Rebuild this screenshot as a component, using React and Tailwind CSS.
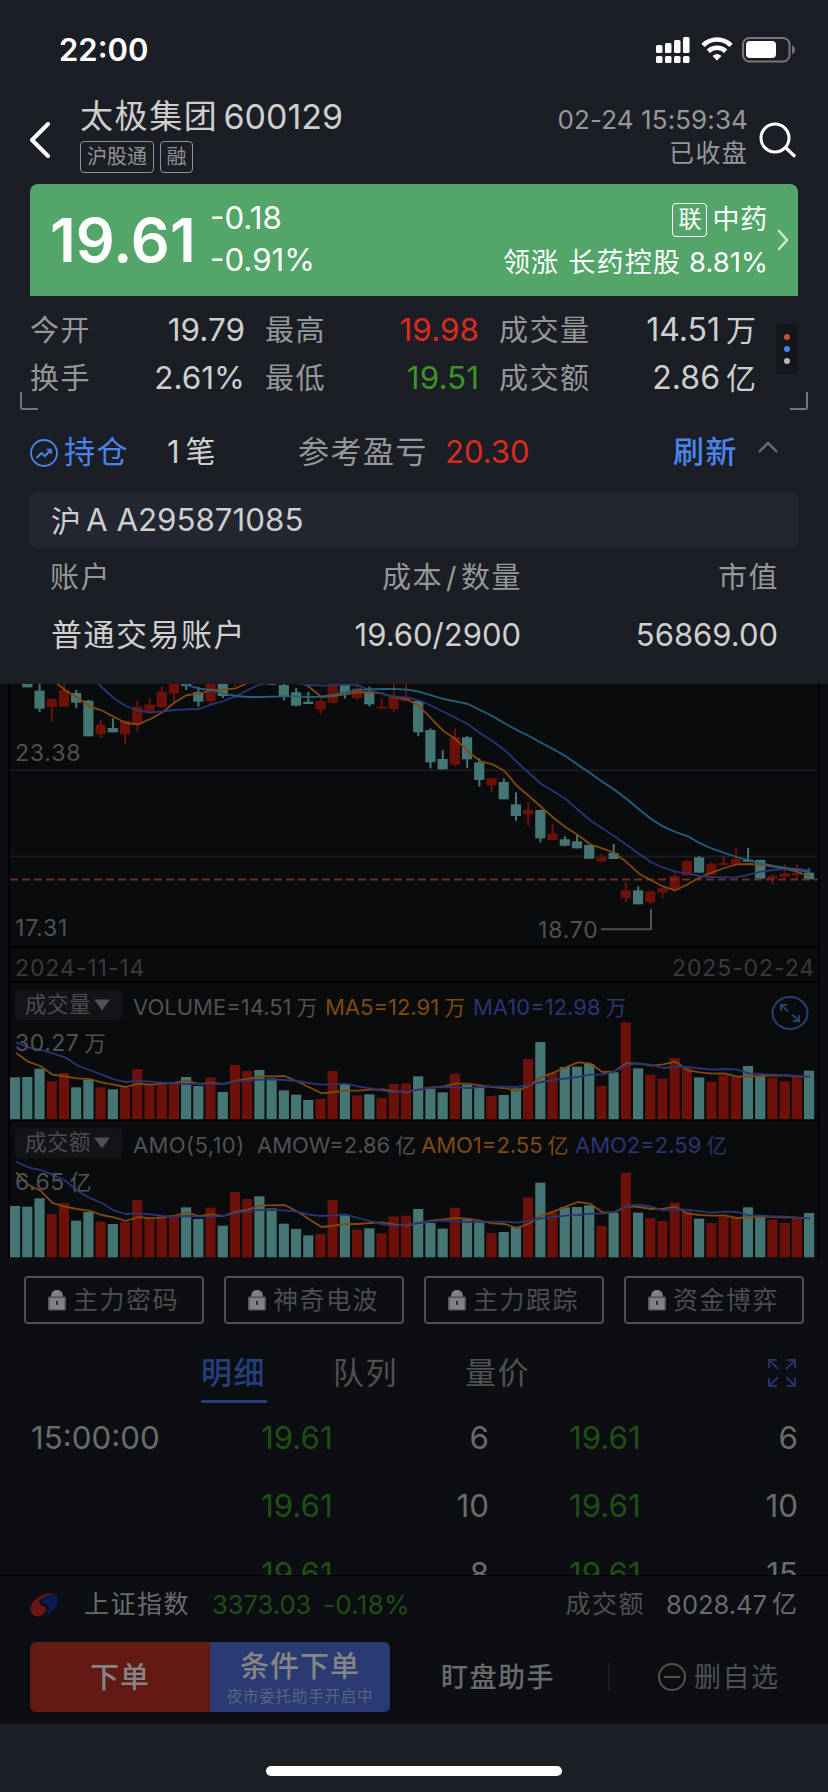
import React from 'react';

const BAR_STEP = 12.215;

// r = up (red), c = down (cyan)
const directions = 'cccrrccrcrrrrrccrcrrcccccrrcrcrrrcccrccrccrcrcccrcrcrrrrcrrrccrrrc';

const colorOf = {
    r: '#6b110a',
    c: '#457674',
};

// [index, direction, body top, body bottom, wick top, wick bottom]
const candles = [
    [1, 'c', 0, 52, 0, 52], [2, 'c', 62, 116, 40, 126], [3, 'r', 87, 111, 85, 156], [4, 'r', 60, 110, 40, 110],
    [5, 'c', 69, 98, 60, 115], [6, 'c', 92, 199, 90, 199], [7, 'r', 164, 193, 150, 205], [8, 'c', 174, 187, 145, 187],
    [9, 'r', 153, 193, 150, 222], [10, 'r', 110, 164, 91, 186], [11, 'r', 104, 127, 85, 131], [12, 'r', 65, 111, 48, 114],
    [13, 'r', 30, 70, 30, 97], [14, 'c', 30, 48, 30, 60], [15, 'c', 66, 95, 50, 110], [16, 'r', 30, 93, 30, 103],
    [17, 'c', 30, 78, 30, 84], [18, 'r', 20, 30, 20, 50], [21, 'c', 30, 44, 30, 44], [22, 'c', 45, 80, 41, 91],
    [23, 'c', 67, 107, 54, 109], [24, 'c', 95, 102, 66, 102], [25, 'r', 93, 119, 85, 132], [26, 'r', 30, 98, 30, 101],
    [27, 'c', 30, 70, 30, 85], [28, 'r', 54, 84, 40, 90], [29, 'c', 65, 103, 50, 109], [30, 'r', 110, 116, 85, 116],
    [31, 'r', 77, 117, 30, 126], [32, 'r', 86, 93, 30, 95], [33, 'c', 93, 187, 90, 199], [34, 'c', 180, 277, 175, 295],
    [35, 'c', 267, 298, 240, 298], [36, 'r', 202, 284, 175, 289], [37, 'c', 202, 268, 198, 295], [38, 'c', 277, 330, 265, 350],
    [39, 'r', 325, 346, 325, 366], [40, 'c', 336, 388, 325, 388], [41, 'c', 403, 438, 367, 452], [42, 'r', 420, 433, 397, 468],
    [43, 'c', 420, 505, 418, 517], [44, 'r', 491, 510, 462, 510], [45, 'c', 508, 527, 499, 529], [46, 'c', 514, 535, 492, 535],
    [47, 'c', 525, 566, 525, 566], [48, 'r', 561, 574, 552, 577], [49, 'c', 549, 567, 522, 567], [50, 'r', 661, 684, 637, 697],
    [51, 'c', 661, 703, 649, 703], [52, 'r', 664, 697, 661, 703], [53, 'r', 655, 668, 655, 684], [54, 'r', 618, 657, 604, 665],
    [55, 'r', 573, 616, 571, 616], [56, 'c', 562, 608, 558, 608], [57, 'r', 581, 614, 577, 614], [58, 'r', 579, 585, 558, 588],
    [59, 'r', 567, 583, 534, 583], [60, 'c', 569, 575, 534, 575], [61, 'c', 570, 626, 570, 626], [62, 'r', 618, 626, 613, 643],
    [63, 'r', 610, 621, 583, 626], [64, 'r', 609, 615, 583, 627], [65, 'c', 608, 628, 595, 628],
];

const priceMa5 = [-60, -30, 0, 30, 60, 82, 109, 121, 140, 159, 163, 147, 127, 97, 75, 71, 60, 59, 55, 38, 10, 0, 5, 28, 51, 81, 78, 73, 67, 66, 70, 82, 88, 108, 146, 183, 207, 245, 273, 283, 303, 347, 378, 411, 443, 472, 495, 523, 535, 549, 577, 611, 631, 650, 661, 643, 622, 607, 594, 583, 582, 584, 590, 597, 606, 618];
const priceMa10 = [-200, -150, -120, -80, -40, -10, 15, 51, 84, 108, 122, 128, 124, 120, 118, 117, 103, 93, 79, 59, 43, 36, 34, 40, 45, 47, 46, 43, 46, 60, 72, 80, 82, 91, 107, 125, 144, 163, 190, 213, 240, 276, 309, 342, 364, 387, 419, 451, 475, 499, 525, 551, 577, 593, 605, 611, 618, 621, 622, 622, 614, 605, 600, 597, 597, 601];
const priceMa20 = [-300, -280, -250, -220, -190, -160, -130, -100, -70, -50, -30, -10, 10, 35, 45, 56, 60, 71, 78, 81, 81, 80, 79, 79, 81, 80, 75, 67, 60, 58, 57, 57, 59, 65, 76, 87, 94, 102, 120, 138, 160, 180, 198, 218, 238, 259, 284, 309, 335, 359, 387, 418, 447, 470, 486, 499, 520, 536, 549, 561, 571, 580, 588, 594, 600, 607];

const volumeTops = [292, 291, 266, 304, 279, 322, 299, 322, 328, 322, 267, 314, 312, 308, 291, 318, 292, 336, 255, 273, 270, 295, 331, 344, 360, 357, 273, 311, 346, 343, 354, 312, 310, 289, 326, 337, 281, 314, 322, 348, 345, 325, 237, 186, 279, 261, 260, 252, 318, 277, 127, 265, 284, 296, 234, 264, 292, 305, 286, 291, 258, 289, 293, 304, 291, 272];
const volumeMa5 = [219, 245, 258, 284, 289, 295, 297, 307, 314, 321, 311, 314, 311, 308, 302, 312, 309, 312, 302, 297, 289, 289, 288, 304, 322, 340, 336, 332, 332, 329, 328, 334, 336, 328, 322, 319, 311, 311, 316, 321, 324, 333, 318, 292, 278, 262, 247, 250, 276, 274, 249, 251, 257, 253, 245, 271, 277, 281, 280, 290, 289, 288, 286, 287, 289, 290];
const volumeMa10 = [187, 202, 210, 220, 232, 256, 270, 283, 298, 306, 302, 305, 308, 310, 312, 311, 312, 312, 304, 301, 299, 299, 300, 303, 309, 314, 313, 311, 319, 325, 332, 337, 334, 329, 323, 321, 322, 324, 321, 320, 320, 321, 315, 306, 300, 295, 291, 284, 284, 274, 254, 250, 255, 264, 260, 261, 265, 269, 267, 268, 280, 282, 284, 285, 288, 290];

const amountTops = [678, 680, 655, 702, 669, 722, 696, 725, 732, 726, 660, 712, 712, 708, 682, 717, 683, 737, 636, 657, 649, 685, 731, 747, 766, 762, 660, 706, 749, 745, 760, 709, 707, 687, 729, 746, 683, 718, 727, 759, 756, 740, 652, 608, 697, 682, 681, 676, 738, 698, 578, 698, 714, 723, 668, 694, 716, 729, 710, 713, 682, 710, 719, 729, 714, 699];
const amountMa5 = [577, 614, 632, 669, 680, 687, 692, 705, 712, 723, 711, 715, 712, 707, 698, 708, 703, 708, 695, 689, 676, 676, 675, 694, 718, 741, 737, 732, 732, 729, 727, 733, 737, 729, 722, 718, 714, 716, 722, 730, 732, 744, 731, 707, 695, 680, 666, 671, 697, 697, 679, 681, 687, 686, 680, 701, 705, 707, 706, 714, 712, 710, 711, 712, 713, 715];
const amountMa10 = [545, 562, 570, 584, 601, 632, 653, 669, 691, 702, 700, 703, 708, 710, 708, 710, 709, 708, 699, 694, 690, 690, 691, 695, 704, 708, 706, 703, 714, 723, 733, 737, 734, 729, 724, 722, 724, 726, 724, 725, 725, 728, 722, 715, 711, 707, 705, 701, 701, 695, 678, 674, 680, 691, 688, 689, 694, 698, 695, 696, 706, 707, 709, 710, 713, 715];

const toPoints = (values, offset) =>
    values.map((v, i) => `${(6 + i * BAR_STEP).toFixed(1)},${(v / 3 - offset).toFixed(1)}`).join(' ');

const Line = ({ values, offset, color }) => (
    <polyline points={toPoints(values, offset)} fill="none" stroke={color} strokeWidth="1.8" strokeLinejoin="round" />
);

const PriceChart = () => (
    <svg width="808" height="261" className="block">
        <path d="M0 86.3H806M0 172.4H806" stroke="#1a1b23" strokeWidth="2" />
        {candles.map(([i, dir, top, bottom, wickTop, wickBottom]) => (
            <g key={i} fill={colorOf[dir]}>
                <rect x={i * BAR_STEP} y={top / 3 - 14} width="10.2" height={(bottom - top) / 3} />
                <rect x={i * BAR_STEP + 4.2} y={wickTop / 3 - 14} width="2" height={(wickBottom - wickTop) / 3} />
            </g>
        ))}
        <path d="M0 195.4H808" stroke="#6b2d25" strokeWidth="2" strokeDasharray="8 4" />
        <Line values={priceMa5} offset={14} color="#80490f" />
        <Line values={priceMa10} offset={14} color="#2b3474" />
        <Line values={priceMa20} offset={14} color="#25617f" />
        <path d="M591 245.3H641V225" fill="none" stroke="#505153" strokeWidth="2" />
    </svg>
);

const BarChart = ({ tops, ma5, ma10, bottom, offset }) => (
    <svg width="808" height="136" className="block overflow-visible">
        {tops.map((top, i) => (
            <rect key={i} x={i * BAR_STEP} y={top / 3 - offset} width="10.2" height={(bottom - top) / 3} fill={colorOf[directions[i]]} />
        ))}
        <Line values={ma5} offset={offset} color="#80490f" />
        <Line values={ma10} offset={offset} color="#2b3474" />
    </svg>
);

const IndicatorTag = ({ children }) => (
    <div className="flex h-[30px] w-[107px] shrink-0 items-center rounded bg-[#121418] pl-[10px] text-[21.5px] tracking-[0.5px] text-[#4c4d4f]">
        {children}
        <svg width="16" height="12" viewBox="0 0 16 12" className="ml-[3px]"><path d="M0 .5H16L8 11.5Z" fill="#505153" /></svg>
    </div>
);

// Number followed by a 万 / 亿 unit
const Amount = ({ value, unit }) => (
    <>
        {value}
        <span className="ml-[5px] text-[0.95em] tracking-normal">{unit}</span>
    </>
);

const LockButton = ({ label }) => (
    <button className="flex h-12 w-[180px] items-center rounded-[4px] border-2 border-[#4e4f51] pl-[22px] text-[25px] tracking-[1.5px] text-[#4c4d50]">
        <svg width="18" height="22" viewBox="0 0 18 22" className="mr-[7px] mb-px">
            <path d="M3.2 8V6.5C3.2 3.3 5.6 1 9 1s5.8 2.3 5.8 5.5V8Z" fill="#808183" />
            <rect y="7.5" width="18" height="14" rx="1" fill="#4f515c" />
            <rect x="1.5" y="9" width="15" height="11.5" fill="#808183" />
            <rect x="8" y="12" width="2" height="4" fill="#33353b" />
        </svg>
        {label}
    </button>
);

const StatusBar = () => (
    <div className="flex h-24 items-start justify-between pt-[34px] pr-8 pl-[59px]">
        <span className="text-[31px] font-semibold text-white">22:00</span>
        <div className="flex items-start pt-[3px]">
            <svg width="34" height="27" viewBox="0 0 34 27" fill="#fff">
                <rect y="8" width="6.5" height="8" rx="1.5" />
                <rect x="9" y="6" width="6.5" height="10" rx="1.5" />
                <rect x="18" y="3" width="6.5" height="13" rx="1.5" />
                <rect x="27" width="6.5" height="16" rx="1.5" />
                <rect y="19" width="6.5" height="7" rx="1.5" />
                <rect x="9" y="19" width="6.5" height="7" rx="1.5" />
                <rect x="18" y="19" width="6.5" height="7" rx="1.5" />
                <rect x="27" y="19" width="6.5" height="7" rx="1.5" />
            </svg>
            <svg width="32" height="24" viewBox="0 0 32 24" className="ml-[11px]">
                <path d="M2 8.4C9.8.6 22.2.6 30 8.4" fill="none" stroke="#fff" strokeWidth="4.6" />
                <path d="M7.3 14.2c4.9-4.6 12.5-4.6 17.4 0" fill="none" stroke="#fff" strokeWidth="4.6" />
                <path d="M11.6 18.9c2.5-2.3 6.3-2.3 8.8 0L16 23.6Z" fill="#fff" />
            </svg>
            <svg width="54" height="26" viewBox="0 0 54 26" className="ml-[9px]">
                <rect x="1" y="1" width="46.5" height="23.5" rx="6.5" fill="none" stroke="#75777c" strokeWidth="2" />
                <rect x="4" y="4" width="30" height="17" rx="4" fill="#fff" />
                <path d="M50 8.5c4 1.5 4 7 0 8.5Z" fill="#75777c" />
            </svg>
        </div>
    </div>
);

const Header = () => (
    <div className="flex h-[88px] pr-8 pl-[30px]">
        <svg width="20" height="36" viewBox="0 0 20 36" className="mt-[26px]">
            <path d="M18 2 2 18 18 34" fill="none" stroke="#fff" strokeWidth="4" strokeLinecap="round" strokeLinejoin="round" />
        </svg>
        <div className="ml-[30px] flex-1">
            <div className="flex h-[45px] items-center pb-1 text-[#cecece]">
                <span className="text-[33px] tracking-[1.6px]">太极集团</span>
                <span className="ml-[5px] text-[34px]">600129</span>
            </div>
            <div className="flex gap-[6px] text-[20px] text-[#929395]">
                <span className="flex h-8 w-[74px] items-center justify-center rounded-[4px] border border-[#929395]">沪股通</span>
                <span className="flex h-8 w-[33px] items-center justify-center rounded-[4px] border border-[#929395]">融</span>
            </div>
        </div>
        <div className="flex flex-col items-end text-[#96979a]">
            <span className="mt-[11px] text-[26px] tracking-[0.1px]">02-24 15:59:34</span>
            <span className="mt-[8px] text-[25px] tracking-[1.3px]">已收盘</span>
        </div>
        <svg width="37" height="36" viewBox="0 0 37 36" className="mt-[26px] ml-[11px]">
            <circle cx="16" cy="16" r="14" fill="none" stroke="#fff" strokeWidth="3" />
            <path d="m26 25 10 9.5" stroke="#fff" strokeWidth="3.2" />
        </svg>
    </div>
);

const QuoteCard = () => (
    <div className="mx-[30px] flex h-28 items-center rounded-t-lg bg-[#53a569] text-white">
        <span className="ml-[20px] w-[160px] text-[61px] font-semibold">19.61</span>
        <div className="mb-px flex flex-1 flex-col gap-[11px] text-[31.3px]">
            <span>-0.18</span>
            <span>-0.91%</span>
        </div>
        <div className="flex flex-col items-end">
            <div className="-mt-px flex items-center">
                <span className="flex h-[34px] w-[35px] items-center justify-center rounded-[4px] border border-white text-[23px]">联</span>
                <span className="ml-[5px] text-[27px] tracking-[0.8px]">中药</span>
            </div>
            <div className="mt-[12px] flex items-center text-[27px]">
                <span className="tracking-[1.2px]">领涨</span>
                <span className="ml-[9px] tracking-[1.2px]">长药控股</span>
                <span className="ml-[8px] text-[27.5px]">8.81%</span>
            </div>
        </div>
        <svg width="12" height="22" viewBox="0 0 12 22" className="mr-[9px] ml-[9px]">
            <path d="m2 2 8 9-8 9" fill="none" stroke="#cbe6d1" strokeWidth="2.6" strokeLinecap="round" />
        </svg>
    </div>
);

const stats = [
    ['今开', '19.79', '最高', '19.98', 'text-[#dc2b1e]', '成交量', '14.51', '万'],
    ['换手', '2.61%', '最低', '19.51', 'text-[#3c9428]', '成交额', '2.86', '亿'],
];

const Stats = () => (
    <div className="relative h-[120px] pl-[30px]">
        <div className="pt-[10px]">
            {stats.map(([l1, v1, l2, v2, color, l3, v3, unit]) => (
                <div key={l1} className="flex h-12 items-center text-[29px] text-[#96979a]">
                    <span className="w-[90px] tracking-[1.5px]">{l1}</span>
                    <span className="w-[125px] text-right text-[31.5px] text-[#cfcfcf]">{v1}</span>
                    <span className="ml-[20px] w-[90px] tracking-[1.5px]">{l2}</span>
                    <span className={`w-[124px] text-right text-[31.5px] ${color}`}>{v2}</span>
                    <span className="ml-[20px] w-[110px] tracking-[1.5px]">{l3}</span>
                    <span className="flex w-[147px] items-center justify-end text-[32px] text-[#cfcfcf]">
                        {v3}<span className="ml-[6px] text-[30px]">{unit}</span>
                    </span>
                </div>
            ))}
        </div>
        <div className="absolute top-7 right-[30px] flex h-[50px] w-[22px] flex-col items-center justify-center gap-[6px] rounded-[4px] bg-[#14161b]">
            <i className="size-[6px] rounded-full bg-[#c2513d]" />
            <i className="size-[6px] rounded-full bg-[#4b84ec]" />
            <i className="size-[6px] rounded-full bg-[#b4b5b7]" />
        </div>
        <div className="absolute top-[96px] left-5 h-[18px] w-[18px] rounded-bl-[3px] border-b-2 border-l-2 border-[#75777c]" />
        <div className="absolute top-[96px] right-5 h-[18px] w-[18px] rounded-br-[3px] border-r-2 border-b-2 border-[#75777c]" />
    </div>
);

const Position = () => (
    <div className="h-[268px] px-[30px] text-[#cfcfcf]">
        <div className="flex h-[76px] items-center pb-[6px] text-[31px]">
            <svg width="28" height="28" viewBox="0 0 28 28" fill="none" stroke="#4b84ec" strokeWidth="1.8" className="mt-[3px]">
                <circle cx="14" cy="14" r="13" />
                <path d="m6.5 19 5-5 3.5 3 5.5-6" strokeWidth="2" />
                <path d="M16.5 10.5h4.5v4.5" strokeWidth="1.6" />
            </svg>
            <span className="ml-[6px] w-[103px] tracking-[1.5px] text-[#4b84ec]">持仓</span>
            <span className="flex w-[131px] items-center">1<span className="ml-[6px] text-[30px]">笔</span></span>
            <span className="w-[147px] tracking-[1.5px] text-[#96979a]">参考盈亏</span>
            <span className="flex-1 pt-px text-[31px] text-[#dc2b1e]">20.30</span>
            <span className="font-medium tracking-[1.5px] text-[#4b84ec]">刷新</span>
            <svg width="20" height="12" viewBox="0 0 20 12" className="mr-5 mb-2 ml-5">
                <path d="m1 11 9-9 9 9" fill="none" stroke="#6b6d72" strokeWidth="2.4" />
            </svg>
        </div>
        <div className="flex h-14 items-center rounded-[6px] bg-[#242631] px-[21px] pt-px text-[31px]">
            <span className="text-[30px]">沪</span>
            <span className="ml-[5px] text-[31.3px]">A A295871085</span>
        </div>
        <div className="grid h-[58px] grid-cols-[220px_252px_1fr] items-center pr-[19px] pl-5 text-[29px] tracking-[1.5px] text-[#96979a]">
            <span>账户</span>
            <span className="text-right">成本<span className="mx-[3px]">/</span>数量</span>
            <span className="text-right">市值</span>
        </div>
        <div className="grid h-[57px] grid-cols-[220px_250px_1fr] items-center pr-5 pl-[21px] text-[31px]">
            <span className="tracking-[1.5px]">普通交易账户</span>
            <span className="text-right">19.60/2900</span>
            <span className="text-right">56869.00</span>
        </div>
    </div>
);

const Charts = () => (
    <div className="mx-[8px] h-[574px] w-[812px] border-x-2 border-black bg-[#090b0d] text-[23px] text-[#505153]">
        <div className="relative h-[262px]">
            <PriceChart />
            <span className="absolute top-[58px] left-[5px] tracking-[0.8px]">23.38</span>
            <span className="absolute top-[233px] left-[5px] tracking-[0.8px]">17.31</span>
            <span className="absolute top-[235px] left-[528px] tracking-[0.8px]">18.70</span>
        </div>
        <div className="flex h-[37px] items-center justify-between border-y-2 border-black pt-[7px] pr-[3px] pl-[5px] tracking-[0.9px] text-[#393a3c]">
            <span>2024-11-14</span>
            <span>2025-02-24</span>
        </div>
        <div className="relative h-[138px] border-b-2 border-black">
            <BarChart tops={volumeTops} ma5={volumeMa5} ma10={volumeMa10} bottom={418} offset={3} />
            <div className="absolute top-[7px] left-[5px] flex items-center">
                <IndicatorTag>成交量</IndicatorTag>
                <div className="ml-[11px] flex pt-[5px] text-[22px]">
                    <span className="w-[192px]"><Amount value="VOLUME=14.51" unit="万" /></span>
                    <span className="w-[148px] text-[#80490f]"><Amount value="MA5=12.91" unit="万" /></span>
                    <span className="text-[#2b3474]"><Amount value="MA10=12.98" unit="万" /></span>
                </div>
            </div>
            <span className="absolute top-[49px] left-[5px] tracking-[0.5px]"><Amount value="30.27" unit="万" /></span>
            <svg width="38" height="36" viewBox="0 0 38 36" fill="none" stroke="#24406f" strokeWidth="2" className="absolute top-[12px] right-[9px]">
                <ellipse cx="19" cy="18" rx="17.5" ry="16" />
                <path d="M17 16.5 10 10M10 16V10H16M21 19.5 28 26M28 20V26H22" />
            </svg>
        </div>
        <div className="relative h-[137px]">
            <BarChart tops={amountTops} ma5={amountMa5} ma10={amountMa10} bottom={832} offset={141} />
            <div className="absolute top-[7px] left-[5px] flex items-center">
                <IndicatorTag>成交额</IndicatorTag>
                <div className="ml-[11px] flex pt-[5px] text-[22px]">
                    <span className="w-[124px] tracking-[0.4px]">AMO(5,10)</span>
                    <span className="w-[164px]"><Amount value="AMOW=2.86" unit="亿" /></span>
                    <span className="w-[154px] text-[#80490f]"><Amount value="AMO1=2.55" unit="亿" /></span>
                    <span className="text-[#2b3474]"><Amount value="AMO2=2.59" unit="亿" /></span>
                </div>
            </div>
            <span className="absolute top-[50px] left-[5px] tracking-[0.5px]"><Amount value="6.65" unit="亿" /></span>
        </div>
    </div>
);

const trades = [
    ['15:00:00', '19.61', '6', '19.61', '6'],
    ['', '19.61', '10', '19.61', '10'],
    ['', '19.61', '8', '19.61', '15'],
];

const Trades = () => (
    <div className="h-[170px] overflow-hidden">
        {trades.map(([time, p1, q1, p2, q2], i) => (
            <div key={i} className="flex h-[68px] items-center pl-[31px] text-[31.3px] text-[#6a6b6d]">
                <span className="w-[230px]">{time}</span>
                <span className="w-[108px] text-[#1f4f15]">{p1}</span>
                <span className="w-[120px] text-right">{q1}</span>
                <span className="ml-[80px] w-[108px] text-[#1f4f15]">{p2}</span>
                <span className="w-[121px] text-right">{q2}</span>
            </div>
        ))}
    </div>
);

const Tabs = () => (
    <div className="flex h-[65px] items-start border-y border-[#08090c] pl-[201px] text-[31px] tracking-[1.5px] text-[#505153]">
        <div className="flex h-[62px] w-[66px] items-center border-b-[3px] border-[#24407c] pt-[3px] font-medium text-[#24407c]">明细</div>
        <div className="ml-[66px] flex h-[61px] w-[66px] items-center pt-[2px]">队列</div>
        <div className="ml-[66px] flex h-[61px] w-[66px] items-center pt-[2px]">量价</div>
        <svg width="28" height="28" viewBox="0 0 28 28" fill="none" stroke="#263269" strokeWidth="2" className="mt-[18px] ml-[237px]">
            <path d="M10 10 1 1M1 9V1H9M18 10 27 1M27 9V1H19M10 18 1 27M1 19V27H9M18 18 27 27M27 19V27H19" />
        </svg>
    </div>
);

const IndexBar = () => (
    <div className="flex h-[58px] items-center border-t border-black pr-[31px] pl-[30px] text-[25px] text-[#6a6b6d]">
        <svg width="28" height="24" viewBox="0 0 28 24">
            <path d="M25 1C16-1 4 4 1 13c-2 6 2 11 7 10.5 5-.5 8-4 8-7.5 0-3-4-2.5-6-5C7 6.5 16 2 25 1Z" fill="#6c1512" />
            <path d="M27 3C21 .5 12 4 12 8.5c0 2.5 5 2 6.5 5.5 1 3-.5 6-3.5 9C22 20 29 13 27.6 5Z" fill="#0b1b52" />
        </svg>
        <span className="ml-[26px] tracking-[1.5px]">上证指数</span>
        <span className="ml-[22px] w-[111px] text-[25.5px] text-[#1f4f15]">3373.03</span>
        <span className="flex-1 text-[26px] tracking-[0.3px] text-[#1f4f15]">-0.18%</span>
        <span className="tracking-[1.5px] text-[#505153]">成交额</span>
        <span className="ml-[21px] text-[25.5px]">8028.47</span>
        <span className="ml-[5px]">亿</span>
    </div>
);

const ActionBar = () => (
    <div className="flex h-[91px] items-start pt-[9px] pl-[30px]">
        <button className="flex h-[70px] w-[180px] items-center justify-center rounded-l-[6px] bg-[#631a14] text-[29px] font-medium tracking-[1px] text-[#858585]">下单</button>
        <button className="flex h-[70px] w-[180px] flex-col items-center justify-center rounded-r-[6px] bg-[#293b72] pt-[2px] text-[#858585]">
            <span className="text-[29px] font-medium tracking-[1px]">条件下单</span>
            <span className="mt-[8px] text-[15.5px] tracking-[0.8px] text-[#5b6580]">夜市委托助手开启中</span>
        </button>
        <div className="flex h-[70px] items-center text-[27px] text-[#6a6b6d]">
            <span className="ml-[51px] font-medium tracking-[1.5px]">盯盘助手</span>
            <i className="ml-[53px] h-7 w-[2px] bg-[#1a1c21]" />
            <svg width="28" height="28" viewBox="0 0 28 28" fill="none" stroke="#505153" strokeWidth="2" className="ml-[48px]">
                <circle cx="14" cy="14" r="13" />
                <path d="M6 14H22" />
            </svg>
            <span className="ml-[8px] tracking-[1.5px] text-[#505153]">删自选</span>
        </div>
    </div>
);

export default function App() {
    return (
        <div className="h-[1792px] w-[828px] overflow-hidden whitespace-nowrap bg-[#0c0e12] font-['Inter','Noto_Sans_CJK_SC',sans-serif] leading-none">
            <div className="h-[684px] bg-[#1b1e25]">
                <StatusBar />
                <Header />
                <QuoteCard />
                <Stats />
                <Position />
            </div>
            <Charts />
            <div className="flex h-[82px] gap-5 pt-[18px] pl-6">
                <LockButton label="主力密码" />
                <LockButton label="神奇电波" />
                <LockButton label="主力跟踪" />
                <LockButton label="资金博弈" />
            </div>
            <Tabs />
            <Trades />
            <IndexBar />
            <ActionBar />
            <div className="flex h-[68px] justify-center bg-[#1c1f26] pt-[42px]">
                <div className="h-[10px] w-[296px] rounded-full bg-white" />
            </div>
        </div>
    );
}
